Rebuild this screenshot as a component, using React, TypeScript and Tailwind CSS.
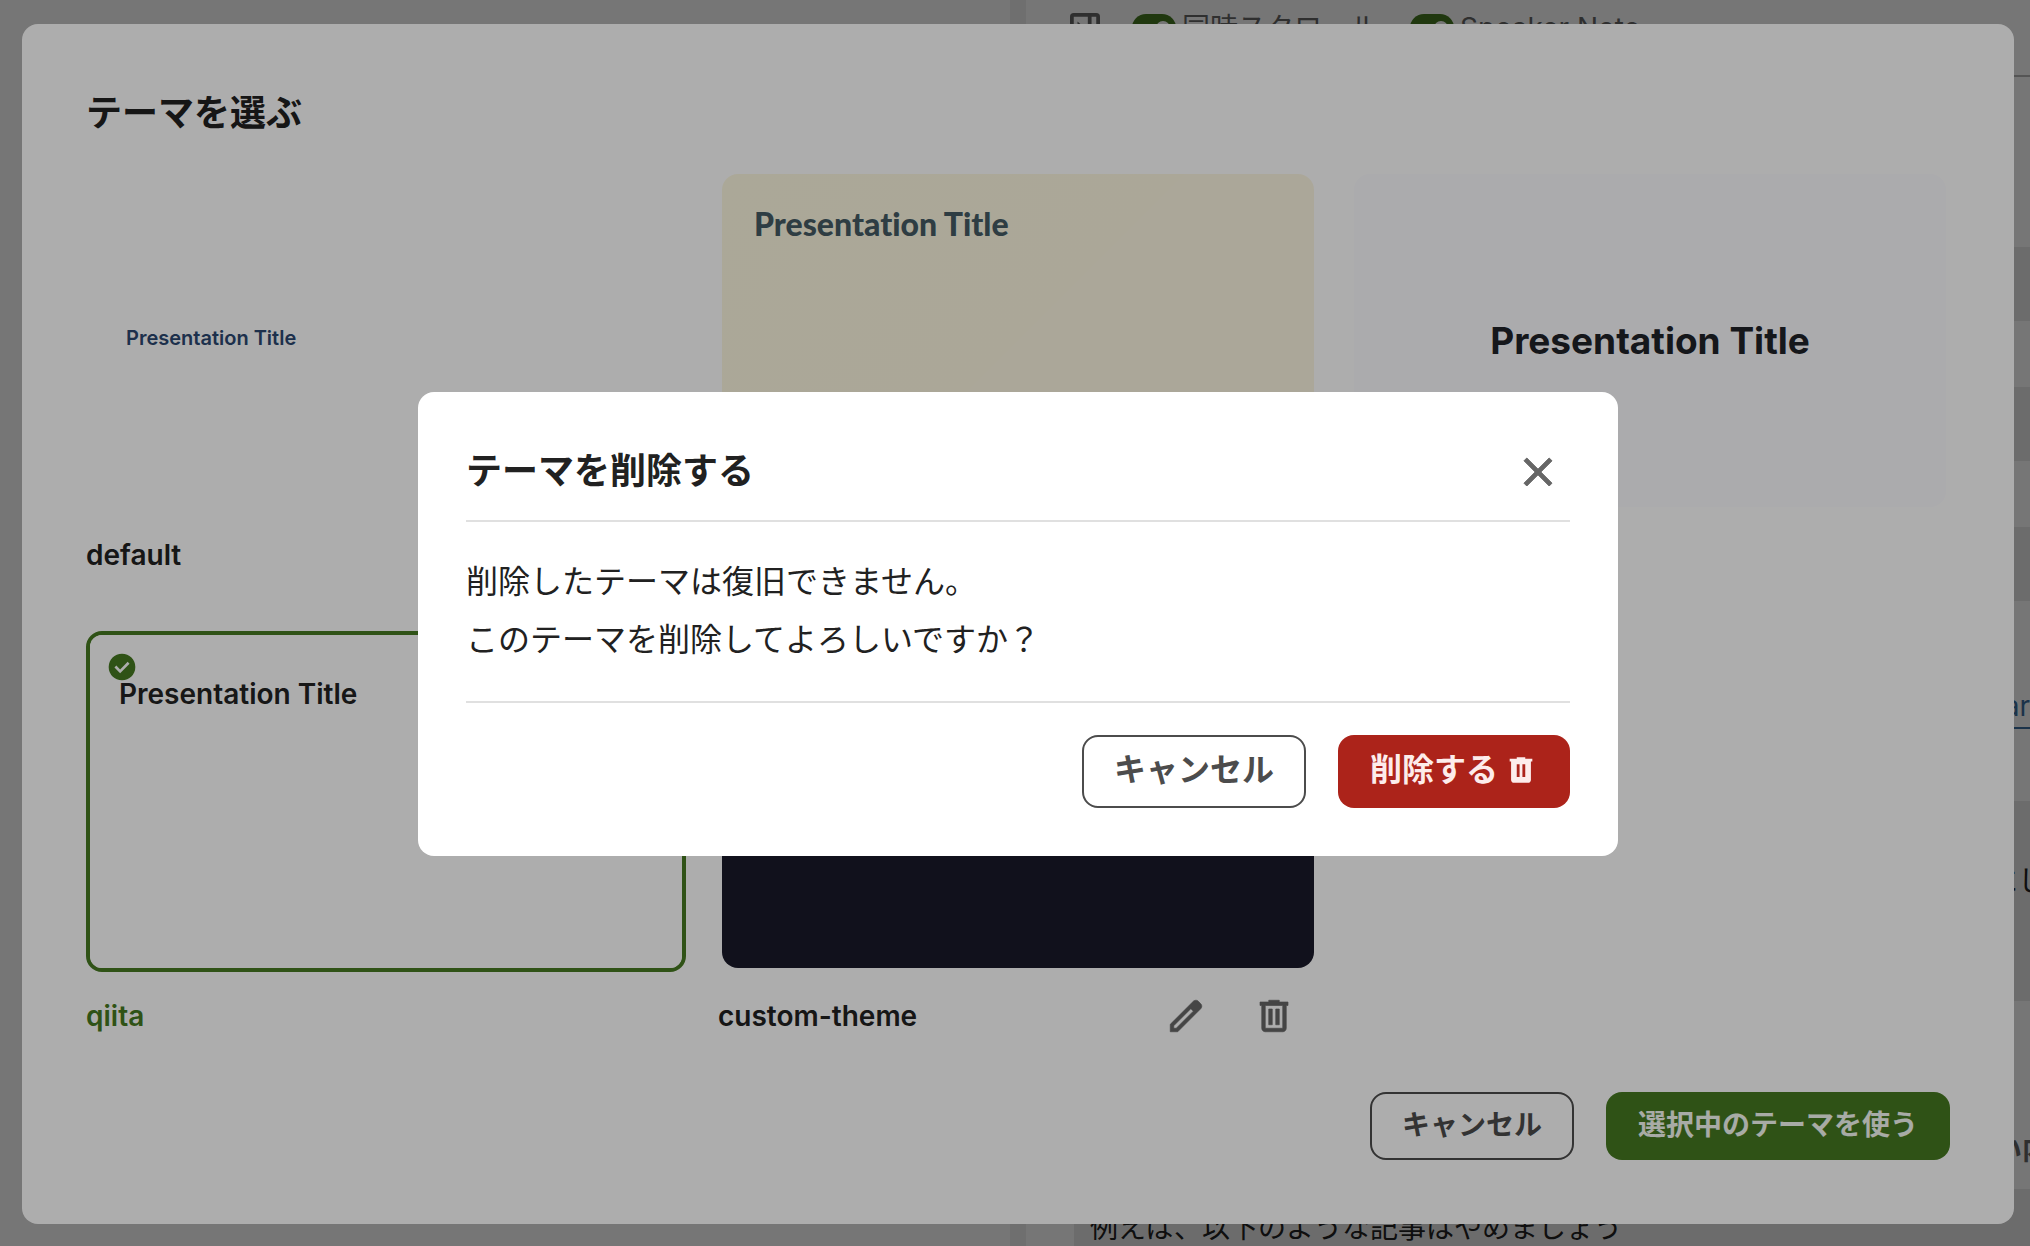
import React, { useState } from 'react'
import clsx from 'clsx'

const ICONS = {
  close:
    'm256-200-56-56 224-224-224-224 56-56 224 224 224-224 56 56-224 224 224 224-56 56-224-224-224 224Z',
  edit: 'M200-200h57l391-391-57-57-391 391v57Zm-80 80v-170l528-527q12-11 26.5-17t30.5-6q16 0 31 6t26 18l55 56q12 11 17.5 26t5.5 30q0 16-5.5 30.5T817-647L290-120H120Z',
  delete:
    'M280-120q-33 0-56.5-23.5T200-200v-520h-40v-80h200v-40h240v40h200v80h-40v520q0 33-23.5 56.5T680-120H280Zm400-600H280v520h400v-520ZM360-280h80v-360h-80v360Zm160 0h80v-360h-80v360Z',
  deleteFilled:
    'M280-120q-33 0-56.5-23.5T200-200v-520h-40v-80h200v-40h240v40h200v80h-40v520q0 33-23.5 56.5T680-120H280Zm80-160h80v-360h-80v360Zm160 0h80v-360h-80v360Z',
  check:
    'm424-296 282-282-56-56-226 226-114-114-56 56 170 170Zm56 216q-83 0-156-31.5T197-197q-54-54-85.5-127T80-480q0-83 31.5-156T197-763q54-54 127-85.5T480-880q83 0 156 31.5T763-763q54 54 85.5 127T880-480q0 83-31.5 156T763-197q-54 54-127 85.5T480-80Z',
}

const Icon = ({
  name,
  className,
}: {
  name: keyof typeof ICONS
  className: string
}) => (
  <svg
    viewBox="0 -960 960 960"
    fill="currentColor"
    aria-hidden="true"
    className={clsx('shrink-0', className)}
  >
    <path d={ICONS[name]} />
  </svg>
)

type Theme = {
  id: string
  label?: string
  preview: string
  title?: string
  editable?: boolean
}

const themes: Theme[] = [
  {
    id: 'default',
    label: 'default',
    preview:
      'flex items-center bg-white px-9 pb-1.5 text-[20px] font-semibold text-[#2c4870]',
    title: 'Presentation Title',
  },
  {
    id: 'gaia',
    preview:
      'bg-[linear-gradient(135deg,#fdf8e0,#fcf7e0_50%,#fdf7e2_50%,#fdf7e2)] px-8 pt-[26px] font-[Lato] text-[32px] font-black text-[#455a64] [font-variant-ligatures:none]',
    title: 'Presentation Title',
  },
  {
    id: 'uncover',
    preview:
      'flex items-center justify-center bg-[#fdfcff] text-[37px] font-bold text-[#202228]',
    title: 'Presentation Title',
  },
  {
    id: 'qiita',
    label: 'qiita',
    preview:
      'bg-white px-[29px] pt-[38px] text-[28px] font-semibold text-[#222222]',
    title: 'Presentation Title',
  },
  {
    id: 'custom-theme',
    label: 'custom-theme',
    preview: 'bg-[#1a1a2a]',
    editable: true,
  },
]

const ThemeCard = ({
  theme,
  selected,
  onSelect,
}: {
  theme: Theme
  selected: boolean
  onSelect: () => void
}) => (
  <li>
    <button
      type="button"
      aria-pressed={selected}
      aria-label={theme.id}
      onClick={onSelect}
      className={clsx(
        'relative block w-full rounded-2xl border-4 text-left',
        selected ? 'border-[#467a21]' : 'border-transparent'
      )}
    >
      <div
        className={clsx(
          'aspect-video overflow-hidden',
          selected ? 'rounded-xl' : 'rounded-2xl',
          theme.preview
        )}
      >
        {theme.title}
      </div>
      {selected && (
        <Icon
          name="check"
          className="absolute top-4 left-4 size-8 text-[#467a21]"
        />
      )}
    </button>
    <div className="mt-4 flex h-14 items-center">
      <span
        className={clsx(
          'grow text-[28px] font-semibold',
          selected && 'text-[#467a21]'
        )}
      >
        {theme.label}
      </span>
      {theme.editable && (
        <div className="flex text-[#666666]">
          <button
            type="button"
            aria-label="編集"
            className="flex w-[88px] justify-center"
          >
            <Icon name="edit" className="size-[42px] stroke-current stroke-15" />
          </button>
          <button
            type="button"
            aria-label="削除"
            className="flex w-[88px] justify-center"
          >
            <Icon name="delete" className="size-[42px] stroke-current stroke-15" />
          </button>
        </div>
      )}
    </div>
  </li>
)

const Toggle = ({ label }: { label: string }) => (
  <label className="flex items-center gap-1.5">
    <input type="checkbox" role="switch" defaultChecked className="peer sr-only" />
    <span className="flex h-7 w-11 items-center justify-end rounded-full bg-[#467a21] px-1.5">
      <span className="size-3.5 rounded-full bg-white" />
    </span>
    {label}
  </label>
)

const Editor = () => (
  <div className="flex h-screen bg-white">
    <div className="flex-1" />
    <div className="w-4 bg-[#f0f0f0]" />
    <div className="flex min-w-0 flex-[0_0_1004px] flex-col text-[28px]">
      <header className="flex h-[77px] shrink-0 items-center gap-8 border-b-2 border-[#b8b8b8] pb-5 pl-11 text-[#666666]">
        <svg
          viewBox="0 0 32 32"
          fill="none"
          stroke="currentColor"
          strokeWidth="4"
          strokeLinejoin="round"
          aria-hidden="true"
          className="size-[30px]"
        >
          <rect x="2" y="2" width="28" height="28" rx="2" />
          <path d="M21 2v28" />
          <path d="M8 9v14l8-7z" fill="currentColor" stroke="none" />
        </svg>
        <Toggle label="同時スクロール" />
        <Toggle label="Speaker Note" />
      </header>
      <div className="flex grow flex-col pl-12">
        <div className="mt-[170px] h-[74px] shrink-0 bg-[#eaeaea]" />
        <div className="mt-[66px] h-[74px] shrink-0 bg-[#eaeaea]" />
        <div className="mt-[66px] h-[74px] shrink-0 bg-[#eaeaea]" />
        <div className="flex h-[200px] shrink-0 items-center justify-end pt-3">
          <a
            href="#article"
            className="border-b-2 border-[#3b6ea0] text-[#3b6ea0]"
          >
            ar
          </a>
        </div>
        <div className="flex h-[200px] shrink-0 items-center justify-end bg-[#eaeaea]">
          <p className="w-10 overflow-hidden whitespace-nowrap pb-10">にし</p>
        </div>
        <div className="flex h-[188px] shrink-0 items-end justify-end">
          <p className="w-9 overflow-hidden pb-[18px] font-semibold whitespace-nowrap text-[#666666]">
            い内
          </p>
        </div>
        <div className="grow bg-[#eaeaea] px-4 pt-[18px]">
          例えば、以下のような記事はやめましょう
        </div>
      </div>
    </div>
  </div>
)

const App = () => {
  const [selected, setSelected] = useState('qiita')

  return (
    <div className="relative h-screen overflow-hidden font-[Inter,'Noto_Sans_CJK_JP',sans-serif] text-[#212121]">
      <Editor />

      <div className="fixed inset-0 bg-black/32 pt-6 pr-4 pb-[22px] pl-[22px]">
        <section
          role="dialog"
          aria-labelledby="theme-title"
          className="flex h-full flex-col rounded-2xl bg-white p-16"
        >
          <h2 id="theme-title" className="text-[36px] leading-[50px] font-bold">
            テーマを選ぶ
          </h2>
          <ul className="mt-8 grid grid-cols-3 gap-x-8 gap-y-12">
            {themes.map(theme => (
              <ThemeCard
                key={theme.id}
                theme={theme}
                selected={theme.id === selected}
                onSelect={() => setSelected(theme.id)}
              />
            ))}
          </ul>
          <div className="mt-12 flex justify-end gap-8 text-[28px] leading-[50px] font-bold">
            <button
              type="button"
              className="rounded-2xl border-2 border-[#4c4c4c] px-[30px] pt-1.5 pb-2 text-[#4c4c4c]"
            >
              キャンセル
            </button>
            <button
              type="button"
              className="rounded-2xl bg-[#467a21] px-8 pt-2 pb-2.5 text-[#f8fcf5]"
            >
              選択中のテーマを使う
            </button>
          </div>
        </section>
      </div>

      <div className="fixed inset-0 flex items-center justify-center bg-black/32 pt-6 pr-4 pb-[22px] pl-[22px]">
        <section
          role="alertdialog"
          aria-labelledby="delete-title"
          className="w-full max-w-[1200px] rounded-2xl bg-white p-12"
        >
          <header className="flex items-center justify-between border-b-2 border-[#e0e0e0] pb-4">
            <h2
              id="delete-title"
              className="pb-0.5 text-[36px] leading-[50px] font-bold"
            >
              テーマを削除する
            </h2>
            <button
              type="button"
              aria-label="閉じる"
              className="flex size-16 items-center justify-center text-[#666666]"
            >
              <Icon
                name="close"
                className="size-12 stroke-current stroke-20 [stroke-linejoin:round]"
              />
            </button>
          </header>
          <p className="border-b-2 border-[#e0e0e0] pt-[31px] pb-8 text-[32px] leading-[58px]">
            削除したテーマは復旧できません。
            <br />
            このテーマを削除してよろしいですか？
          </p>
          <div className="mt-8 flex justify-end gap-8 text-[32px] leading-[58px] font-bold">
            <button
              type="button"
              className="rounded-2xl border-2 border-[#4c4c4c] px-[30px] pt-1 pb-[7px] text-[#4c4c4c]"
            >
              キャンセル
            </button>
            <button
              type="button"
              className="flex items-center gap-1.5 rounded-2xl bg-[#ac231a] px-8 pt-1.5 pb-[9px] text-[#fdeceb]"
            >
              削除する
              <Icon name="deleteFilled" className="size-[34px]" />
            </button>
          </div>
        </section>
      </div>
    </div>
  )
}

export default App
